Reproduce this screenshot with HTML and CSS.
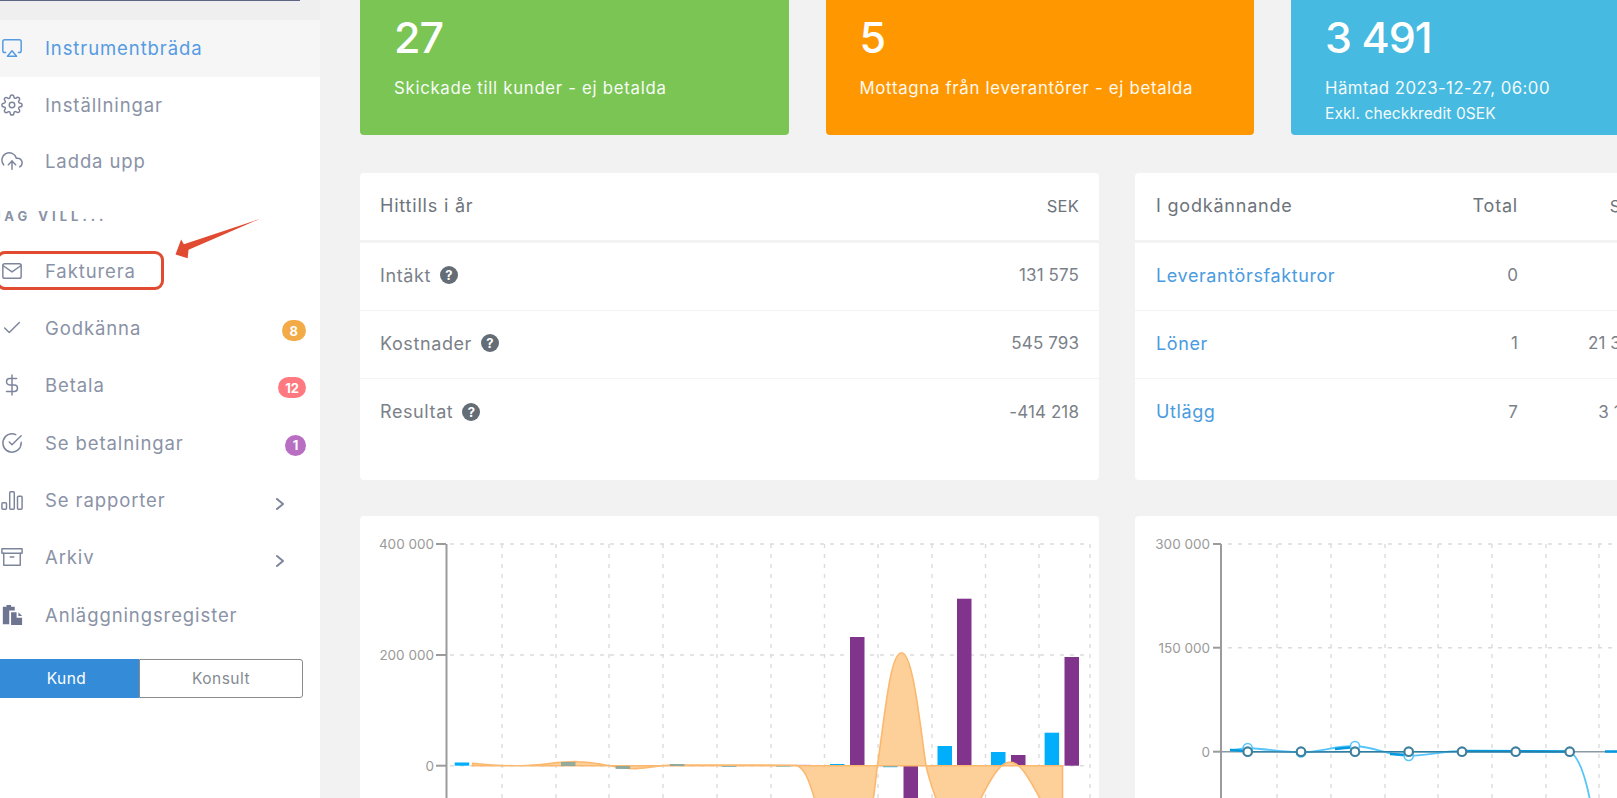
FILE: index.html
```html
<!DOCTYPE html>
<html lang="sv">
<head>
<meta charset="utf-8">
<title>Instrumentbräda</title>
<link rel="stylesheet" href="styles.css">
</head>
<body>
<div class="app">
  <aside class="sidebar">
    <div class="topline"></div>
    <nav class="nav">
      <a class="nav-item nav-item-top active"><svg class="ico" viewBox="0 0 24 24"><path d="M5 17H4a2 2 0 0 1-2-2V5a2 2 0 0 1 2-2h16a2 2 0 0 1 2 2v10a2 2 0 0 1-2 2h-1"/><polygon points="12 15 17 21 7 21 12 15"/></svg><span class="label">Instrumentbräda</span></a>
      <a class="nav-item nav-item-top"><svg class="ico" viewBox="0 0 24 24"><circle cx="12" cy="12" r="3"/><path d="M19.4 15a1.65 1.65 0 0 0 .33 1.82l.06.06a2 2 0 0 1 0 2.83 2 2 0 0 1-2.83 0l-.06-.06a1.65 1.65 0 0 0-1.82-.33 1.65 1.65 0 0 0-1 1.51V21a2 2 0 0 1-2 2 2 2 0 0 1-2-2v-.09A1.65 1.65 0 0 0 9 19.4a1.65 1.65 0 0 0-1.82.33l-.06.06a2 2 0 0 1-2.83 0 2 2 0 0 1 0-2.83l.06-.06a1.65 1.65 0 0 0 .33-1.82 1.65 1.65 0 0 0-1.51-1H3a2 2 0 0 1-2-2 2 2 0 0 1 2-2h.09A1.65 1.65 0 0 0 4.6 9a1.65 1.65 0 0 0-.33-1.82l-.06-.06a2 2 0 0 1 0-2.83 2 2 0 0 1 2.83 0l.06.06a1.65 1.65 0 0 0 1.82.33H9a1.65 1.65 0 0 0 1-1.51V3a2 2 0 0 1 2-2 2 2 0 0 1 2 2v.09a1.65 1.65 0 0 0 1 1.51 1.65 1.65 0 0 0 1.82-.33l.06-.06a2 2 0 0 1 2.83 0 2 2 0 0 1 0 2.83l-.06.06a1.65 1.65 0 0 0-.33 1.82V9a1.65 1.65 0 0 0 1.51 1H21a2 2 0 0 1 2 2 2 2 0 0 1-2 2h-.09a1.65 1.65 0 0 0-1.51 1z"/></svg><span class="label">Inställningar</span></a>
      <a class="nav-item nav-item-top"><svg class="ico" viewBox="0 0 24 24"><polyline points="16 16 12 12 8 16"/><line x1="12" y1="12" x2="12" y2="21"/><path d="M20.39 18.39A5 5 0 0 0 18 9h-1.26A8 8 0 1 0 3 16.3"/></svg><span class="label">Ladda upp</span></a>
      <div class="nav-title">JAG VILL...</div>
      <a class="nav-item"><svg class="ico" viewBox="0 0 24 24"><path d="M4 4h16a2 2 0 0 1 2 2v12a2 2 0 0 1-2 2H4a2 2 0 0 1-2-2V6a2 2 0 0 1 2-2z"/><polyline points="22,6 12,13 2,6"/></svg><span class="label">Fakturera</span></a>
      <a class="nav-item"><svg class="ico" viewBox="0 0 24 24"><polyline points="20 6 9 17 4 12"/></svg><span class="label">Godkänna</span><span class="badge badge-orange">8</span></a>
      <a class="nav-item"><svg class="ico" viewBox="0 0 24 24"><line x1="12" y1="1" x2="12" y2="23"/><path d="M17 5H9.5a3.5 3.5 0 0 0 0 7h5a3.5 3.5 0 0 1 0 7H6"/></svg><span class="label">Betala</span><span class="badge badge-red">12</span></a>
      <a class="nav-item"><svg class="ico" viewBox="0 0 24 24"><path d="M22 11.08V12a10 10 0 1 1-5.93-9.14"/><polyline points="22 4 12 14.01 9 11.01"/></svg><span class="label">Se betalningar</span><span class="badge badge-purple">1</span></a>
      <a class="nav-item"><svg class="ico" viewBox="0 0 24 24"><rect x="1" y="15" width="5" height="7" rx="1"/><rect x="9.5" y="3" width="5" height="19" rx="1"/><rect x="18" y="8" width="5" height="14" rx="1"/></svg><span class="label">Se rapporter</span><svg class="chev" viewBox="0 0 10 14"><polyline points="2 2 8 7 2 12"/></svg></a>
      <a class="nav-item"><svg class="ico" viewBox="0 0 24 24"><polyline points="21 8 21 21 3 21 3 8"/><rect x="1" y="3" width="22" height="5"/><line x1="10" y1="12" x2="14" y2="12"/></svg><span class="label">Arkiv</span><svg class="chev" viewBox="0 0 10 14"><polyline points="2 2 8 7 2 12"/></svg></a>
      <a class="nav-item"><svg class="ico ico-solid" viewBox="0 0 24 24"><path d="M2 3h4V1h5v2h4v4H9v15H2z"/><path d="M11 9h6v6h6v8H11z"/><path d="M19 9l4 4h-4z"/></svg><span class="label">Anläggningsregister</span></a>
      <div class="switch">
        <button class="switch-btn switch-on">Kund</button>
        <button class="switch-btn switch-off">Konsult</button>
      </div>
    </nav>
    <div class="highlight"></div>
    <svg class="arrow" viewBox="0 0 90 45"><polygon points="0,38 6,22 9,27 90,0 14,33 13,42" /></svg>
  </aside>

  <main class="main">
    <section class="stats">
      <div class="stat stat-green"><div class="stat-num">27</div><div class="stat-sub">Skickade till kunder - ej betalda</div></div>
      <div class="stat stat-orange"><div class="stat-num">5</div><div class="stat-sub">Mottagna från leverantörer - ej betalda</div></div>
      <div class="stat stat-blue"><div class="stat-num">3 491</div><div class="stat-sub stat-date">Hämtad 2023-12-27, 06:00</div><div class="stat-sub stat-small">Exkl. checkkredit 0SEK</div></div>
    </section>

    <section class="panels">
      <div class="panel">
        <div class="row row-head row-left"><span>Hittills i år</span><span class="currency">SEK</span></div>
        <div class="row row-left"><span class="cell-label">Intäkt <i class="help">?</i></span><span class="value">131 575</span></div>
        <div class="row row-left"><span class="cell-label">Kostnader <i class="help">?</i></span><span class="value">545 793</span></div>
        <div class="row row-left row-last"><span class="cell-label">Resultat <i class="help">?</i></span><span class="value">-414 218</span></div>
      </div>
      <div class="panel">
        <div class="row row-head row-right"><span>I godkännande</span><span class="num">Total</span><span class="num currency">SEK</span></div>
        <div class="row row-right"><a class="link">Leverantörsfakturor</a><span class="num value">0</span><span class="num value">0</span></div>
        <div class="row row-right"><a class="link">Löner</a><span class="num value">1</span><span class="num value">21 365</span></div>
        <div class="row row-right row-last"><a class="link">Utlägg</a><span class="num value">7</span><span class="num value">3 120</span></div>
      </div>
    </section>

    <section class="panels charts">
      <div class="panel chart-panel">
        <svg class="chart" viewBox="360 516 739 282">
          <g class="grid">
            <line x1="450" y1="544" x2="1090" y2="544"/><line x1="450" y1="655" x2="1090" y2="655"/><line x1="450" y1="765.7" x2="1090" y2="765.7"/>
            <line x1="502" y1="544" x2="502" y2="798"/><line x1="556" y1="544" x2="556" y2="798"/><line x1="609" y1="544" x2="609" y2="798"/><line x1="663" y1="544" x2="663" y2="798"/><line x1="717" y1="544" x2="717" y2="798"/><line x1="771" y1="544" x2="771" y2="798"/><line x1="824.5" y1="544" x2="824.5" y2="798"/><line x1="878" y1="544" x2="878" y2="798"/><line x1="932" y1="544" x2="932" y2="798"/><line x1="985.5" y1="544" x2="985.5" y2="798"/><line x1="1039" y1="544" x2="1039" y2="798"/><line x1="1090" y1="544" x2="1090" y2="798"/>
          </g>
          <g class="axis"><line x1="446.5" y1="544" x2="446.5" y2="798"/><line x1="436" y1="544" x2="446" y2="544"/><line x1="436" y1="655" x2="446" y2="655"/><line x1="436" y1="765.7" x2="446" y2="765.7"/></g>
          <g class="tick"><text x="434" y="549">400 000</text><text x="434" y="660">200 000</text><text x="434" y="771">0</text></g>
          <g class="bar-blue">
            <rect x="454.7" y="762.5" width="14.5" height="3.2"/><rect x="830" y="764" width="14.5" height="2"/><rect x="883" y="765.7" width="14.5" height="1.5"/><rect x="937.5" y="746" width="14.5" height="19.7"/><rect x="991" y="752" width="14.5" height="13.7"/><rect x="1044.6" y="732.7" width="14.5" height="33"/><rect x="722" y="765.7" width="14.5" height="1.2"/><rect x="776" y="765" width="14.5" height="1.6"/>
          </g>
          <g class="bar-purple">
            <rect x="850" y="637" width="14.5" height="128.7"/><rect x="957" y="598.7" width="14.5" height="167"/><rect x="1064.5" y="657" width="14.5" height="108.7"/><rect x="903.5" y="765.7" width="14.5" height="40"/><rect x="1011" y="755" width="14.5" height="10.7"/><rect x="796" y="764.6" width="14.5" height="1.2" class="pale"/>
          </g>
          <path class="area" d="M472.6 763.3 C490 765 505 766 520 765.7 C540 766 560 761 578 761.7 C600 762 615 769 636 768.7 C650 768 660 765.5 670 765 L796 765.2 C806 768 810 785 815 800 L873 800 C875 790 876 775 877.4 765.7 C885 715 890 652.7 901.6 652.7 C913 652.7 920 725 926 765.7 C929 780 933 790 936.5 800 L980 800 C990 780 1000 762 1010 762 C1022 762 1032 785 1041 800 L1062.5 800 L1062.5 765.7 L1041 765.7 L936 765.7 L926 765.7 L877 765.7 L796 765.7 L670 765.7 L472.6 765.7 Z"/>
          <g class="bar-muted"><rect x="561" y="762" width="14.5" height="4"/><rect x="615.6" y="766" width="14.5" height="3"/><rect x="670" y="764" width="14.5" height="2"/></g>
        </svg>
      </div>
      <div class="panel chart-panel">
        <svg class="chart" viewBox="1135 516 739 282">
          <g class="grid">
            <line x1="1228" y1="544" x2="1617" y2="544"/><line x1="1228" y1="647.7" x2="1617" y2="647.7"/>
            <line x1="1277" y1="544" x2="1277" y2="798"/><line x1="1331" y1="544" x2="1331" y2="798"/><line x1="1385" y1="544" x2="1385" y2="798"/><line x1="1438" y1="544" x2="1438" y2="798"/><line x1="1492" y1="544" x2="1492" y2="798"/><line x1="1546" y1="544" x2="1546" y2="798"/><line x1="1599" y1="544" x2="1599" y2="798"/>
          </g>
          <g class="axis"><line x1="1221" y1="544" x2="1221" y2="798"/><line x1="1213" y1="544" x2="1221" y2="544"/><line x1="1213" y1="647.7" x2="1221" y2="647.7"/><line x1="1213" y1="751.7" x2="1221" y2="751.7"/></g>
          <g class="tick"><text x="1210" y="549">300 000</text><text x="1210" y="653">150 000</text><text x="1210" y="757">0</text></g>
          <line class="base" x1="1221" y1="751.7" x2="1617" y2="751.7"/>
          <path class="line-light" d="M1230 750 C1238 750 1242 748 1247.7 748 C1265 749 1285 752 1301 752.5 C1320 752 1335 746 1355 746 C1375 747 1390 756 1408.7 756 C1430 755 1445 751 1462 751 L1515.7 751 L1569.7 751.7 C1578 756 1585 775 1590 800"/>
          <path class="line-thick" d="M1230 750 L1247 751 M1335 749 L1355 747 M1390 754 L1408 755 M1462 751 L1569 751.5 M1605 751.5 L1617 751.5"/>
          <g class="dot-light"><circle cx="1247.7" cy="748" r="4.5"/><circle cx="1355" cy="746" r="4.5"/><circle cx="1408.7" cy="756" r="4.5"/><circle cx="1301" cy="752.5" r="4.5"/></g>
          <path class="line-dark" d="M1247.7 751.7 L1301 752 L1355 751.7 L1408.7 751.7 L1462 751.7 L1515.7 751.7 L1569.7 751.7"/>
          <g class="dot-dark"><circle cx="1247.7" cy="751.7" r="4.3"/><circle cx="1301" cy="751.7" r="4.3"/><circle cx="1355" cy="751.7" r="4.3"/><circle cx="1408.7" cy="751.7" r="4.3"/><circle cx="1462" cy="751.7" r="4.3"/><circle cx="1515.7" cy="751.7" r="4.3"/><circle cx="1569.7" cy="751.7" r="4.3"/></g>
        </svg>
      </div>
    </section>
  </main>
</div>
</body>
</html>
```

FILE: styles.css
```css
* { box-sizing: border-box; }
html, body { margin: 0; height: 798px; overflow: hidden; }
body { font-family: Inter, "Noto Sans", "Liberation Sans", sans-serif; background: #f2f2f2; color: #7b8188; }

.app { display: flex; height: 798px; overflow: hidden; }

/* Sidebar */
.sidebar { position: relative; flex: 0 0 320px; background: #efefef; display: flex; flex-direction: column; }
.topline { width: 300px; height: 1px; margin-bottom: 19px; background: #5d6585; flex: none; }
.nav { flex: 1; background: #fff; display: flex; flex-direction: column; }
.nav-item { display: flex; align-items: center; height: 57.3px; flex: none; padding-right: 14px; font-size: 18.5px; letter-spacing: .9px; color: #8a92a6; }
.nav-item-top { height: 56.5px; }
.nav-item.active { background: #f6f6f6; color: #559be2; }
.nav-item.active .ico { stroke: #559be2; }
.ico { width: 22px; height: 22px; margin-left: 1px; margin-right: 22px; flex: none; fill: none; stroke: #7d859c; stroke-width: 1.6; stroke-linecap: round; stroke-linejoin: round; }
.ico-solid { fill: #6d7591; stroke: none; }
.label { flex: 1; }
.nav-title { height: 52.7px; line-height: 52px; margin-left: -7px; font-size: 13px; font-weight: 700; letter-spacing: 4px; color: #8a92a6; white-space: nowrap; }
.badge { display: flex; align-items: center; justify-content: center; height: 21px; min-width: 21px; margin-top: 5px; padding: 0 5px; border-radius: 11px; color: #fff; font-size: 13px; font-weight: 700; letter-spacing: 0; }
.badge-orange { background: #f3ab47; padding: 0 8px; }
.badge-red { background: #ff7a80; padding: 0 7px; }
.badge-purple { background: #b86fc2; padding: 0; }
.chev { width: 10px; height: 14px; margin-top: 7px; margin-right: 21px; fill: none; stroke: #7d859c; stroke-width: 2; stroke-linecap: round; stroke-linejoin: round; }
.switch { display: flex; width: 303px; height: 39px; margin-top: 16px; flex: none; }
.switch-btn { font-family: inherit; font-size: 15.5px; letter-spacing: .5px; height: 39px; border-radius: 0; cursor: pointer; }
.switch-on { width: 139px; border: 0; background: #348bd8; color: #fff; text-indent: -6px; }
.switch-off { width: 164px; background: #fff; color: #858b92; border: 1px solid #8a8a8a; border-radius: 0 3px 3px 0; }

/* Annotation */
.highlight { position: absolute; left: -4px; top: 251px; width: 168px; height: 39px; border: 3px solid #e04b32; border-radius: 9px; }
.arrow { position: absolute; left: 174px; top: 219px; width: 87px; height: 42px; fill: #e04b32; }

/* Main */
.main { flex: none; width: 1554px; padding-left: 40px; display: flex; flex-direction: column; }
.stats { display: grid; grid-template-columns: repeat(3, 428.5px); column-gap: 37px; }
.stat { height: 135px; padding: 9px 34px 0; border-radius: 0 0 4px 4px; color: #fff; }
.stat-green { background: #7ac554; }
.stat-orange { background: #ff9800; }
.stat-blue { background: #46bae0; }
.stat-num { font-size: 43px; font-weight: 500; line-height: 56px; letter-spacing: -1px; }
.stat-sub { margin-top: 10px; font-size: 16.8px; line-height: 26px; letter-spacing: .7px; opacity: .95; white-space: nowrap; }
.stat-date { letter-spacing: .45px; }
.stat-small { margin-top: 0; font-size: 15.5px; letter-spacing: .1px; }

.panels { display: grid; grid-template-columns: 739px 739px; column-gap: 36px; margin-top: 38px; }
.charts { margin-top: 36px; }
.panel { height: 307px; background: #fff; border-radius: 4px; }
.row { display: grid; align-items: center; height: 68px; padding-bottom: 3px; font-size: 18px; letter-spacing: .6px; border-bottom: 1px solid #f3f3f3; }
.row-head { height: 70px; padding-bottom: 2px; border-bottom: 3px solid #f3f3f3; color: #6d747c; letter-spacing: .8px; }
.row-last { border-bottom: 0; }
.row-left { grid-template-columns: 1fr auto; padding-left: 20px; padding-right: 20px; }
.row-right { grid-template-columns: 1fr 80px 124px; padding-left: 21px; padding-right: 232px; }
.num { text-align: right; }
.value { font-size: 17px; letter-spacing: .1px; }
.currency { font-size: 16.5px; letter-spacing: .2px; }
.cell-label { display: flex; align-items: center; gap: 9px; }
.help { display: inline-flex; align-items: center; justify-content: center; width: 18px; height: 18px; border-radius: 50%; background: #646c75; color: #fff; font-size: 13px; font-style: normal; font-weight: 700; letter-spacing: 0; }
.link { color: #4a9be0; }

/* Charts */
.chart-panel { height: 282px; border-radius: 4px 4px 0 0; }
.chart { display: block; width: 739px; height: 282px; }
.grid line { stroke: #dcdcdc; stroke-width: 1.4; stroke-dasharray: 4 6; }
.axis line { stroke: #9b9b9b; stroke-width: 2; }
.tick text { font-family: inherit; font-size: 13.5px; fill: #9a9a9a; text-anchor: end; }
.bar-blue rect { fill: #00aefc; }
.bar-muted rect { fill: #7fa6a0; opacity: .85; }
.bar-purple rect { fill: #80348c; }
.bar-purple .pale { fill: #d9bfe0; }
.area { fill: #fdd09a; stroke: #fbb86f; stroke-width: 1.6; }
.base { stroke: #8c9aa3; stroke-width: 1.4; }
.line-light { fill: none; stroke: #55c5fb; stroke-width: 1.8; }
.line-thick { fill: none; stroke: #0099e0; stroke-width: 2.6; }
.line-dark { fill: none; stroke: #2a7fa5; stroke-width: 1.4; }
.dot-light circle { fill: #fff; stroke: #55c5fb; stroke-width: 1.6; }
.dot-dark circle { fill: #fff; stroke: #3f7f9e; stroke-width: 2.2; }
```
